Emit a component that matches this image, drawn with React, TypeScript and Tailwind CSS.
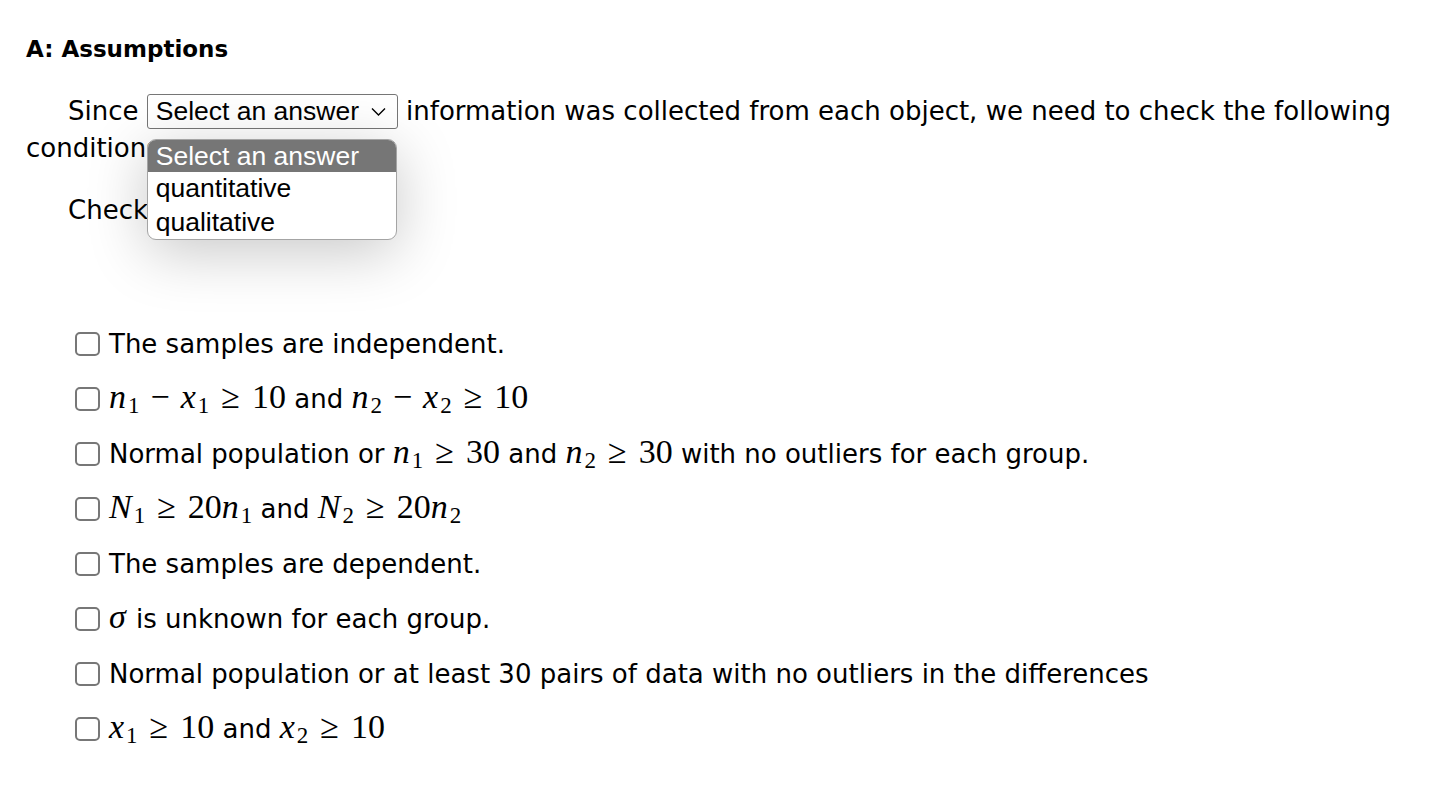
import React from 'react';

type Piece = string | { v: string; s?: string };

// one math expression, KaTeX-like: italic variables, upright digits and relations
function M({ parts }: { parts: Piece[] }) {
  return (
    <span className="font-['Liberation_Serif',serif] text-[34px] leading-none whitespace-nowrap">
      {parts.map((p, i) => {
        if (typeof p === 'string') {
          if (p === '≥') return <span key={i} className="mx-[12px]">≥</span>;
          if (p === '−') return <span key={i} className="mx-[11px]">−</span>;
          return <span key={i}>{p}</span>;
        }
        return (
          <span key={i}>
            <span className="italic pr-[2px]">{p.v}</span>
            {p.s && <span className="text-[23px] relative top-[5px]">{p.s}</span>}
          </span>
        );
      })}
    </span>
  );
}

function Box() {
  return <span className="inline-block w-[25px] h-[24px] rounded-[5px] border-[2px] border-[#777777] bg-white shrink-0" />;
}

const rows: React.ReactNode[] = [
  <>The samples are independent.</>,
  <>
    <M parts={[{ v: 'n', s: '1' }, '−', { v: 'x', s: '1' }, '≥', '10']} /> and{' '}
    <M parts={[{ v: 'n', s: '2' }, '−', { v: 'x', s: '2' }, '≥', '10']} />
  </>,
  <>
    Normal population or <M parts={[{ v: 'n', s: '1' }, '≥', '30']} /> and{' '}
    <M parts={[{ v: 'n', s: '2' }, '≥', '30']} /> with no outliers for each group.
  </>,
  <>
    <M parts={[{ v: 'N', s: '1' }, '≥', '20', { v: 'n', s: '1' }]} /> and{' '}
    <M parts={[{ v: 'N', s: '2' }, '≥', '20', { v: 'n', s: '2' }]} />
  </>,
  <>The samples are dependent.</>,
  <>
    <M parts={[{ v: 'σ' }]} /> is unknown for each group.
  </>,
  <>Normal population or at least 30 pairs of data with no outliers in the differences</>,
  <>
    <M parts={[{ v: 'x', s: '1' }, '≥', '10']} /> and <M parts={[{ v: 'x', s: '2' }, '≥', '10']} />
  </>,
];

export default function App() {
  return (
    <div className="min-h-screen bg-white text-black px-[26px] pt-[34px] font-['DejaVu_Sans',sans-serif] text-[26px]">
      <h3 className="font-bold text-[23px] leading-[30px]">A: Assumptions</h3>

      <p className="mt-[29px] indent-[42px] leading-[37px]">
        Since{' '}
        <span className="relative inline-block indent-0">
          <span className="inline-flex items-center h-[35px] w-[251px] pl-[8px] pr-[11px] border border-[#767676] rounded-[3px] font-['Liberation_Sans',sans-serif] text-[26.5px] leading-none">
            <span className="flex-1">Select an answer</span>
            <svg width="15" height="9" viewBox="0 0 15 9" fill="none" stroke="#000" strokeWidth="1.4">
              <path d="M1 1.5l6.5 6.5 6.5-6.5" />
            </svg>
          </span>
          {/* opened native list */}
          <span className="absolute left-0 top-[46px] z-10 w-[250px] flex flex-col rounded-[9px] border border-[#a4a4a4] bg-white overflow-hidden font-['Liberation_Sans',sans-serif] text-[26.5px] leading-none shadow-[0_12px_60px_rgba(0,0,0,0.22)]">
            <span className="h-[32px] pl-[8px] flex items-center bg-[#767676] text-white">Select an answer</span>
            <span className="h-[33px] pl-[8px] flex items-center">quantitative</span>
            <span className="h-[34px] pl-[8px] flex items-center">qualitative</span>
          </span>
        </span>{' '}
        information was collected from each object, we need to check the following conditions:
      </p>

      <p className="mt-[25px] indent-[42px] leading-[37px]">Check all that apply.</p>

      <div className="mt-[99px] pl-[49px] flex flex-col gap-[23px]">
        {rows.map((r, i) => (
          <label key={i} className="flex items-center gap-[9px] h-[32px] whitespace-nowrap">
            <Box />
            <span>{r}</span>
          </label>
        ))}
      </div>
    </div>
  );
}
